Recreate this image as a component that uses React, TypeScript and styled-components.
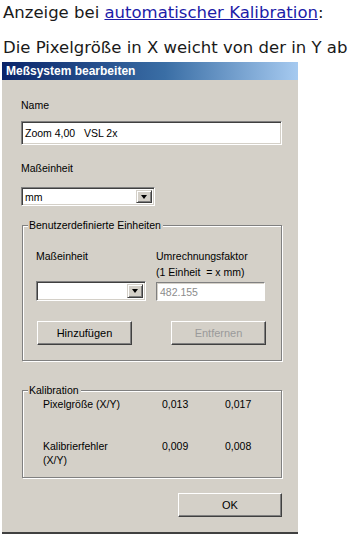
import React from "react";
import styled, { createGlobalStyle } from "styled-components";

const GlobalStyle = createGlobalStyle`
  html, body {
    margin: 0;
    padding: 0;
    background: #ffffff;
  }
  body {
    font-family: "DejaVu Sans", Verdana, sans-serif;
    color: #1a1a1a;
  }
`;

const Page = styled.div`
  width: 355px;
  height: 544px;
  padding-top: 3px;
  box-sizing: border-box;
  overflow: hidden;
`;

const Intro = styled.p<{ $gap?: number }>`
  margin: ${(p) => p.$gap ?? 0}px 0 0 3px;
  font-size: 16.5px;
  line-height: 20px;
  white-space: nowrap;
`;

const Link = styled.a`
  color: #1c1ca8;
  text-decoration: underline;
`;

const Dialog = styled.div`
  width: 296px;
  margin: 4px 0 0 2px;
  font-family: "Liberation Sans", Arial, sans-serif;
  font-size: 10.5px;
  color: #000;
`;

const TitleBar = styled.div`
  height: 18px;
  display: flex;
  align-items: center;
  padding-left: 4px;
  background: linear-gradient(to right, #0a246a 0%, #3a6ea5 55%, #a6caf0 100%);
  color: #fff;
  font-weight: bold;
  font-size: 12px;
`;

const Body = styled.div`
  background: #d4d0c8;
  padding: 19px 0 15px 19px;
  border-bottom: 2px solid #404040;
  display: flex;
  flex-direction: column;
`;

const Label = styled.div<{ $top?: number }>`
  line-height: 13px;
  margin-top: ${(p) => p.$top ?? 0}px;
`;

const Sunken = styled.div<{ $w: number; $h: number; $top?: number; $soft?: boolean }>`
  box-sizing: border-box;
  width: ${(p) => p.$w}px;
  height: ${(p) => p.$h}px;
  margin-top: ${(p) => p.$top ?? 0}px;
  background: #fff;
  border-style: solid;
  border-width: 1px;
  border-color: #808080 #ffffff #ffffff #808080;
  box-shadow: ${(p) =>
    p.$soft
      ? "inset 1px 1px 0 #d4d0c8"
      : "inset 1px 1px 0 #404040, inset -1px -1px 0 #d4d0c8"};
  display: flex;
  align-items: center;
  padding-left: 3px;
  color: ${(p) => (p.$soft ? "#8c8c8c" : "#000")};
  white-space: pre;
`;

const ComboText = styled.span`
  flex: 1;
`;

const ComboButton = styled.div`
  box-sizing: border-box;
  width: 16px;
  align-self: stretch;
  margin: 2px;
  background: #d4d0c8;
  border-style: solid;
  border-width: 1px;
  border-color: #d4d0c8 #404040 #404040 #d4d0c8;
  box-shadow: inset 1px 1px 0 #fff, inset -1px -1px 0 #808080;
  display: flex;
  align-items: center;
  justify-content: center;
`;

const Arrow = styled.div`
  width: 0;
  height: 0;
  border-left: 3.5px solid transparent;
  border-right: 3.5px solid transparent;
  border-top: 4px solid #000;
`;

const Group = styled.fieldset<{ $top: number; $pad: string }>`
  box-sizing: border-box;
  width: 260px;
  margin: ${(p) => p.$top}px 0 0 1px;
  padding: ${(p) => p.$pad};
  border: 1px solid #808080;
  box-shadow: 1px 1px 0 #fff, inset 1px 1px 0 #fff;
  min-inline-size: 0;
`;

const Legend = styled.legend`
  margin-left: 5px;
  padding: 0 2px 0 1px;
  line-height: 13px;
  background: #d4d0c8;
`;

const UnitGrid = styled.div`
  display: grid;
  grid-template-columns: 110px 109px;
  column-gap: 10px;
  padding-left: 13px;
  align-items: end;
`;

const Stack = styled.div`
  line-height: 16px;
  align-self: start;
  white-space: pre;
`;

const ButtonRow = styled.div`
  display: flex;
  gap: 39px;
  margin-top: 20px;
  padding-left: 14px;
`;

const Button = styled.div<{ $w: number; $disabled?: boolean }>`
  box-sizing: border-box;
  width: ${(p) => p.$w}px;
  height: 24px;
  background: #d4d0c8;
  border-style: solid;
  border-width: 1px;
  border-color: #ffffff #404040 #404040 #ffffff;
  box-shadow: inset -1px -1px 0 #808080;
  display: flex;
  align-items: center;
  justify-content: center;
  color: ${(p) => (p.$disabled ? "#9a9a9a" : "#000")};
  font-size: 11px;
`;

const CalGrid = styled.div`
  display: grid;
  grid-template-columns: 119px 63px 40px;
  row-gap: 28px;
  padding-left: 20px;
  line-height: 14px;
`;

const Value = styled.div``;

const Actions = styled.div`
  display: flex;
  justify-content: flex-end;
  width: 261px;
  margin-top: 15px;
`;

export default function App() {
  return (
    <Page>
      <GlobalStyle />
      <Intro>
        Anzeige bei <Link href="#">automatischer Kalibration</Link>:
      </Intro>
      <Intro $gap={15}>Die Pixelgröße in X weicht von der in Y ab</Intro>
      <Dialog>
        <TitleBar>Meßsystem bearbeiten</TitleBar>
        <Body>
          <Label>Name</Label>
          <Sunken $w={261} $h={24} $top={9}>
            {"Zoom 4,00   VSL 2x"}
          </Sunken>
          <Label $top={17}>Maßeinheit</Label>
          <Sunken $w={134} $h={19} $top={12}>
            <ComboText>mm</ComboText>
            <ComboButton>
              <Arrow />
            </ComboButton>
          </Sunken>

          <Group $top={13} $pad="16px 0 15px 0">
            <Legend>Benutzerdefinierte Einheiten</Legend>
            <UnitGrid>
              <Stack>Maßeinheit</Stack>
              <Stack>{"Umrechnungsfaktor\n(1 Einheit  = x mm)"}</Stack>
              <Sunken $w={110} $h={20} $top={1}>
                <ComboText />
                <ComboButton>
                  <Arrow />
                </ComboButton>
              </Sunken>
              <Sunken $w={109} $h={19} $top={1} $soft>
                482.155
              </Sunken>
            </UnitGrid>
            <ButtonRow>
              <Button $w={95}>Hinzufügen</Button>
              <Button $w={95} $disabled>
                Entfernen
              </Button>
            </ButtonRow>
          </Group>

          <Group $top={23} $pad="0 0 10px 0">
            <Legend>Kalibration</Legend>
            <CalGrid>
              <div>Pixelgröße (X/Y)</div>
              <Value>0,013</Value>
              <Value>0,017</Value>
              <div>
                Kalibrierfehler
                <br />
                (X/Y)
              </div>
              <Value>0,009</Value>
              <Value>0,008</Value>
            </CalGrid>
          </Group>

          <Actions>
            <Button $w={104}>OK</Button>
          </Actions>
        </Body>
      </Dialog>
    </Page>
  );
}
